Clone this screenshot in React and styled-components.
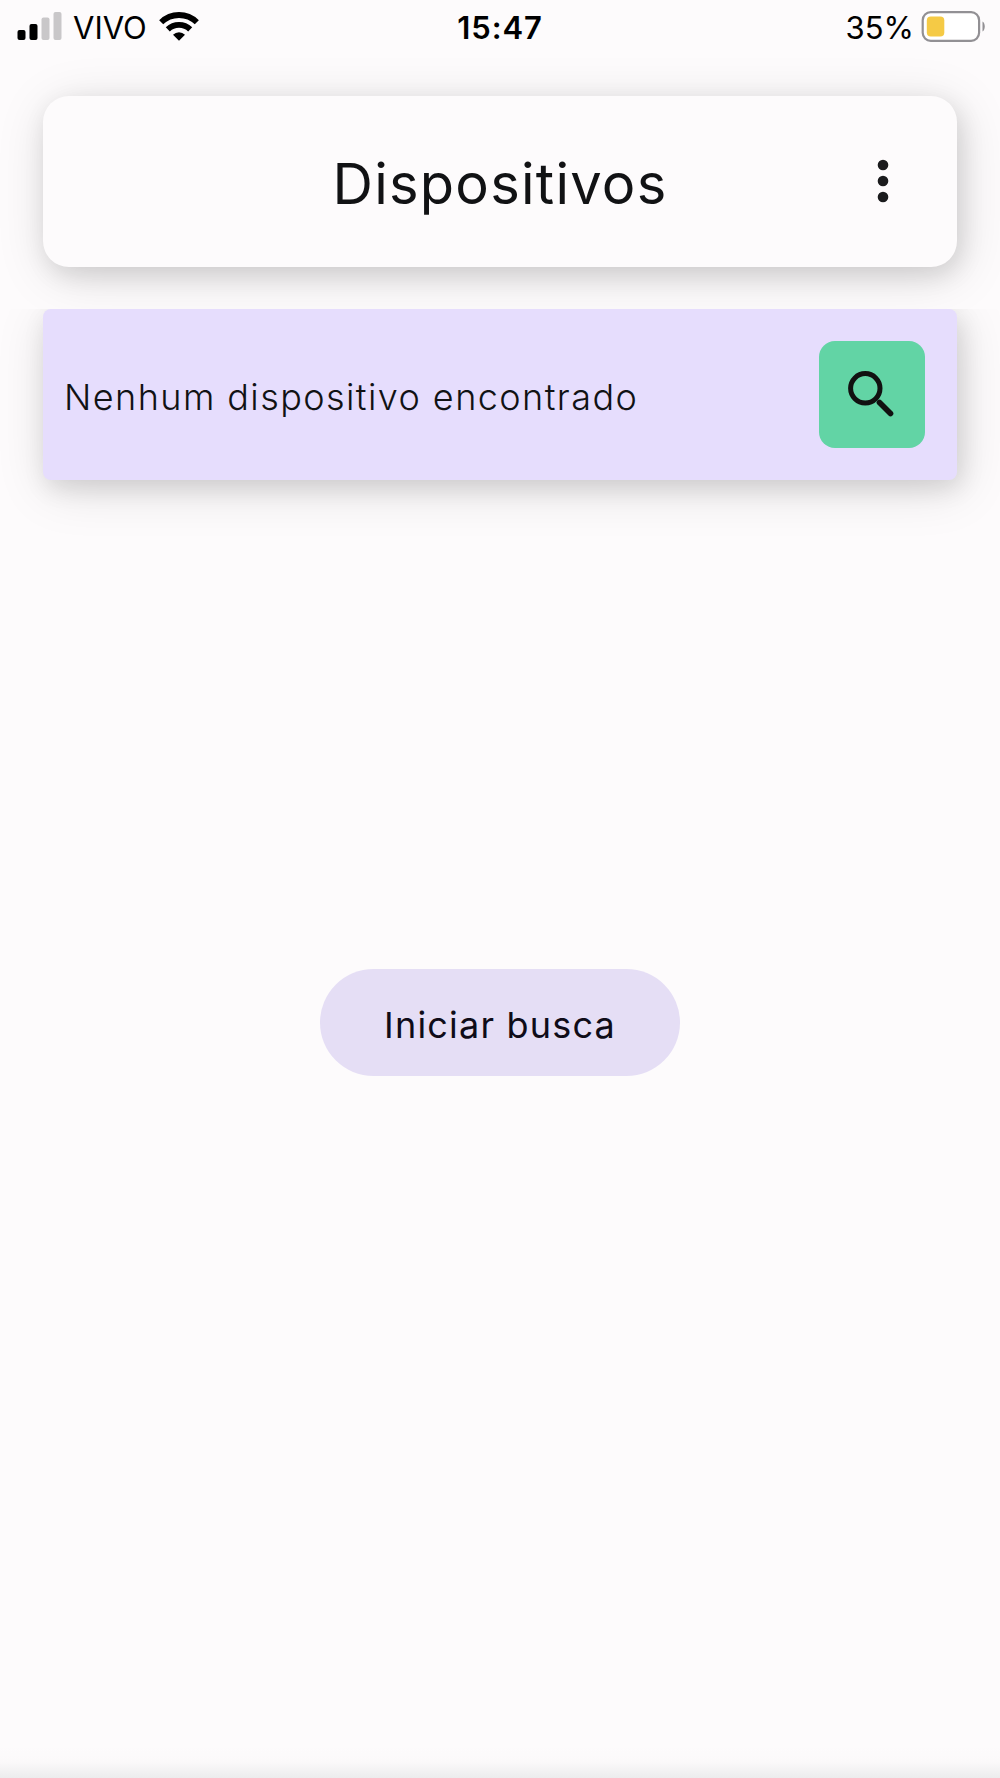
import React from "react"
import styled, { createGlobalStyle } from "styled-components"

const GlobalStyle = createGlobalStyle`
  * {
    box-sizing: border-box;
  }

  body {
    margin: 0;
    background: #fdfbfc;
    font-family: Inter, "Liberation Sans", sans-serif;
  }
`

const Screen = styled.div`
  display: flex;
  flex-direction: column;
  height: 1778px;
  overflow: hidden;
  background: #fdfbfc;
`

const StatusBar = styled.header`
  display: grid;
  grid-template-columns: 1fr auto 1fr;
  align-items: center;
  height: 53px;
  flex: none;
  padding: 0 15px 0 17px;
  color: #000;
`

const StatusGroup = styled.div`
  display: flex;
  align-items: center;
  justify-content: ${(props) => (props.$end ? "flex-end" : "flex-start")};
`

const StatusText = styled.span`
  font-size: 31px;
  line-height: 40px;
  padding-top: 2px;
  font-weight: ${(props) => props.$weight || 400};
  letter-spacing: ${(props) => props.$spacing || "0"};
  margin: ${(props) => props.$margin || "0"};
  white-space: nowrap;
`

const TitleCard = styled.div`
  display: grid;
  grid-template-columns: 1fr auto 1fr;
  align-items: center;
  flex: none;
  height: 171px;
  margin: 43px 43px 0;
  border-radius: 26px;
  background: #fdfbfc;
  box-shadow: 4px 8px 24px rgba(0, 0, 0, 0.11), 4px 9px 52px rgba(0, 0, 0, 0.13);
`

const Title = styled.h1`
  grid-column: 2;
  margin: 0;
  padding-top: 5px;
  font-size: 56px;
  line-height: 70px;
  font-weight: 400;
  letter-spacing: 1.25px;
  color: #111214;
`

const MenuButton = styled.button`
  justify-self: end;
  display: flex;
  margin-right: 42.5px;
  padding: 0 0 1px;
  border: 0;
  background: none;
`

const DeviceList = styled.main`
  flex: 1;
  margin-top: 42px;
  padding: 0 43px;
  overflow: hidden;
`

const DeviceCard = styled.div`
  display: flex;
  align-items: center;
  justify-content: space-between;
  height: 171px;
  padding: 0 32px 0 21px;
  border-radius: 8px;
  background: #e6ddfd;
  box-shadow: 4px 8px 24px rgba(0, 0, 0, 0.11), 4px 9px 52px rgba(0, 0, 0, 0.13);
`

const DeviceText = styled.p`
  margin: 0;
  padding-top: 5px;
  font-size: 36px;
  line-height: 48px;
  font-weight: 300;
  letter-spacing: 1.42px;
  color: #111214;
`

const SearchButton = styled.button`
  display: flex;
  align-items: center;
  justify-content: center;
  width: 106px;
  height: 107px;
  padding: 0 2px 2px 0;
  border: 0;
  border-radius: 16px;
  background: #62d4a5;
`

const StartButton = styled.button`
  display: block;
  width: 360px;
  height: 107px;
  margin: 489px auto 0;
  padding: 4px 0 0;
  border: 0;
  border-radius: 54px;
  background: #e5def5;
  color: #0f0c18;
  font-family: inherit;
  font-size: 36px;
  letter-spacing: 1.2px;
`

const BottomShade = styled.div`
  flex: none;
  height: 32px;
  background: linear-gradient(#fdfbfc, #fbf9fa 50%, #ececed);
`

const SignalIcon = () => (
  <svg width="46" height="30" viewBox="0 0 46 30">
    <rect x="0.5" y="18" width="8" height="10" rx="2" />
    <rect x="12.5" y="12" width="8" height="16" rx="2" />
    <rect x="24.5" y="5.5" width="8" height="22.5" rx="2" fill="#c9c7c9" />
    <rect x="36.5" y="0" width="8" height="28" rx="2" fill="#c9c7c9" />
  </svg>
)

const WifiIcon = () => (
  <svg width="40" height="30" viewBox="0 0 40 30">
    <g fill="none" stroke="#000" strokeWidth="5.8">
      <path d="M2.2 10.3a25.3 25.3 0 0 1 35.6 0" />
      <path d="M8.8 17.4a16 16 0 0 1 22.4 0" />
    </g>
    <path d="M14 22.8a8.4 8.4 0 0 1 12 0L20 28.8z" />
  </svg>
)

const BatteryIcon = () => (
  <svg width="64" height="32" viewBox="0 0 64 32">
    <rect x="1.7" y="1.2" width="56.4" height="28.6" rx="8" fill="#fff" stroke="#929094" strokeWidth="2.2" />
    <rect x="5.8" y="5.5" width="17.5" height="20" rx="4" fill="#f5ca45" />
    <path d="M61.5 10.5c3 1.5 3 8.5 0 10z" fill="#929094" />
  </svg>
)

const DotsIcon = () => (
  <svg width="64" height="64" viewBox="0 0 24 24" fill="#1b1b1d">
    <circle cx="12" cy="6" r="2" />
    <circle cx="12" cy="12" r="2" />
    <circle cx="12" cy="18" r="2" />
  </svg>
)

const SearchIcon = () => (
  <svg width="46" height="46" viewBox="0 0 46 46" fill="none" stroke="#111">
    <circle cx="17.3" cy="17.3" r="14.7" strokeWidth="5" />
    <path d="M31.5 31.5L42.5 42.5" strokeWidth="5.6" strokeLinecap="round" />
  </svg>
)

const App = () => {
  return (
    <Screen>
      <GlobalStyle />
      <StatusBar>
        <StatusGroup>
          <SignalIcon />
          <StatusText $margin="0 12px 0 10px">VIVO</StatusText>
          <WifiIcon />
        </StatusGroup>
        <StatusText $weight={600} $spacing="0.9px" $margin="0 2px 0 0">
          15:47
        </StatusText>
        <StatusGroup $end>
          <StatusText $margin="0 7px 0 0">35%</StatusText>
          <BatteryIcon />
        </StatusGroup>
      </StatusBar>

      <TitleCard>
        <Title>Dispositivos</Title>
        <MenuButton aria-label="Menu">
          <DotsIcon />
        </MenuButton>
      </TitleCard>

      <DeviceList>
        <DeviceCard>
          <DeviceText>Nenhum dispositivo encontrado</DeviceText>
          <SearchButton aria-label="Buscar">
            <SearchIcon />
          </SearchButton>
        </DeviceCard>
        <StartButton>Iniciar busca</StartButton>
      </DeviceList>
      <BottomShade />
    </Screen>
  )
}

export default App
